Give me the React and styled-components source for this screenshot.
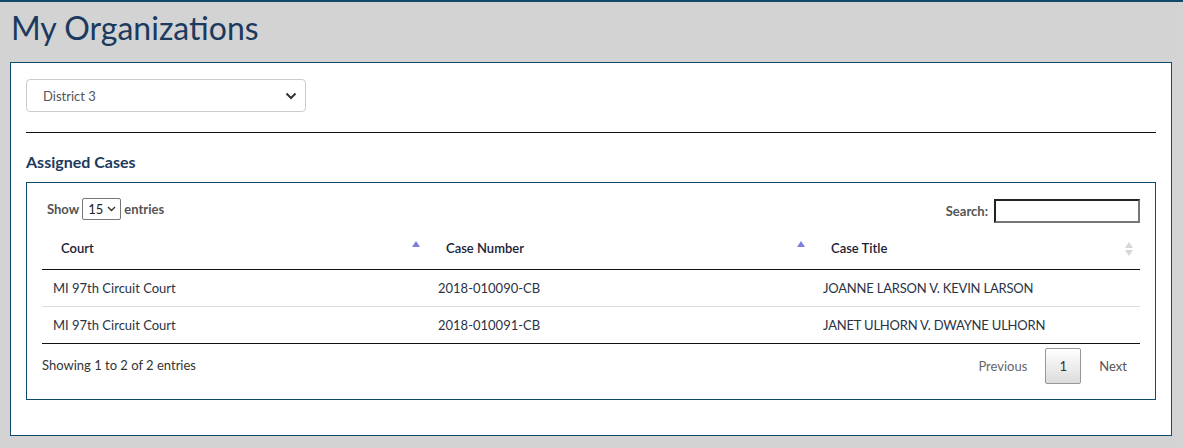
import React from "react";
import styled, { createGlobalStyle } from "styled-components";

const Global = createGlobalStyle`
  html, body { margin: 0; padding: 0; }
  body {
    background: #d3d3d3;
    font-family: "Lato", "Open Sans", "Liberation Sans", sans-serif;
    color: #333;
  }
  * { box-sizing: border-box; }
`;

const Page = styled.div`
  border-top: 2px solid #0f4a6a;
  min-height: 448px;
  padding: 0 11px 0 10px;
`;

const Title = styled.h1`
  margin: 0;
  padding: 7px 0 0 1px;
  height: 60px;
  font-size: 32px;
  font-weight: 400;
  line-height: 38px;
  color: #1b3a5e;
`;

const Panel = styled.section`
  background: #fff;
  border: 1px solid #0f4a6a;
  padding: 16px 15px 15px 15px;
`;

const SelectWrap = styled.div`
  position: relative;
  width: 280px;
  height: 33px;
  border: 1px solid #ccc;
  border-radius: 4px;
  display: flex;
  align-items: center;
  padding-left: 16px;
  font-size: 13px;
  color: #555;
`;

const Chevron = styled.svg`
  position: absolute;
  right: 8px;
  top: 12px;
`;

const Rule = styled.hr`
  margin: 20px 0 0 0;
  border: 0;
  border-top: 1px solid #111;
  height: 0;
`;

const SectionTitle = styled.h2`
  margin: 0;
  padding-top: 19px;
  height: 49px;
  font-size: 16px;
  font-weight: 700;
  line-height: 20px;
  color: #1b3a5e;
`;

const Box = styled.div`
  border: 1px solid #0f4a6a;
  padding: 16px 15px 15px 15px;
  margin-bottom: 20px;
`;

const Controls = styled.div`
  display: flex;
  justify-content: space-between;
  align-items: center;
  height: 24px;
  padding-left: 5px;
  font-size: 13px;
  font-weight: 700;
  color: #555;
`;

const Length = styled.div`
  display: flex;
  align-items: center;
  gap: 3px;
  margin-top: -4px;
`;

const MiniSelect = styled.div`
  display: inline-flex;
  align-items: center;
  gap: 4px;
  height: 22px;
  padding: 0 4px 0 5px;
  border: 1px solid #767676;
  border-radius: 2px;
  font-weight: 400;
  color: #222;
`;

const SearchBox = styled.label`
  display: flex;
  align-items: center;
  gap: 6px;
`;

const SearchInput = styled.input`
  width: 146px;
  height: 24px;
  border: 2px solid;
  border-color: #222 #767676 #767676 #222;
  padding: 1px 2px;
  font: inherit;
  outline: none;
`;

const Table = styled.table`
  width: 100%;
  margin-top: 6px;
  border-collapse: collapse;
  table-layout: fixed;
  font-size: 13px;
  border-bottom: 1px solid #111;
`;

const Th = styled.th`
  position: relative;
  text-align: left;
  padding: 9px 18px 11px 19px;
  line-height: 20px;
  font-weight: 600;
  color: #1a2238;
  border-bottom: 1px solid #111;
`;

const SortIcon = styled.svg`
  position: absolute;
  right: 6px;
  top: 11px;
`;

const Tr = styled.tr`
  & + & td { border-top: 1px solid #ddd; }
`;

const Td = styled.td`
  padding: 8px 10px 8px 11px;
  line-height: 20px;
  color: #2a3345;
  letter-spacing: ${(p) => (p.$caps ? "-0.2px" : "0")};
`;

const Footer = styled.div`
  display: flex;
  justify-content: space-between;
  align-items: center;
  padding-top: 4px;
  font-size: 13px;
  color: #333;
`;

const Status = styled.span`
  margin-top: -3px;
`;

const Pager = styled.div`
  display: flex;
  align-items: center;
`;

const PageLink = styled.span`
  padding: 0 ${(p) => (p.$last ? 13 : 14)}px 0 14px;
  color: ${(p) => (p.$muted ? "#666" : "#555")};
  line-height: 36px;
`;

const PageCurrent = styled.span`
  display: inline-flex;
  align-items: center;
  justify-content: center;
  width: 36px;
  height: 36px;
  margin: 0 4px;
  border: 1px solid #979797;
  border-radius: 2px;
  background: linear-gradient(to bottom, #fff 0%, #dcdcdc 100%);
  color: #333;
`;

const Asc = () => (
  <SortIcon width="10" height="16" viewBox="0 0 10 16">
    <path d="M5 1 L9 7 L1 7 Z" fill="#7b7fe0" />
  </SortIcon>
);

const Both = () => (
  <SortIcon width="10" height="16" viewBox="0 0 10 16" style={{ top: 12 }}>
    <path d="M5 1 L9 7 L1 7 Z" fill="#d6d6d6" />
    <path d="M5 15 L9 9 L1 9 Z" fill="#d6d6d6" />
  </SortIcon>
);

const rows = [
  ["MI 97th Circuit Court", "2018-010090-CB", "JOANNE LARSON V. KEVIN LARSON"],
  ["MI 97th Circuit Court", "2018-010091-CB", "JANET ULHORN V. DWAYNE ULHORN"],
];

export default function App() {
  return (
    <>
      <Global />
      <Page>
        <Title>My Organizations</Title>
        <Panel>
          <SelectWrap>
            District 3
            <Chevron width="12" height="8" viewBox="0 0 12 8">
              <path d="M1.5 1.5 L6 6 L10.5 1.5" fill="none" stroke="#333" strokeWidth="2" />
            </Chevron>
          </SelectWrap>
          <Rule />
          <SectionTitle>Assigned Cases</SectionTitle>
          <Box>
            <Controls>
              <Length>
                Show
                <MiniSelect>
                  15
                  <svg width="9" height="6" viewBox="0 0 9 6">
                    <path d="M1 1 L4.5 4.5 L8 1" fill="none" stroke="#333" strokeWidth="1.4" />
                  </svg>
                </MiniSelect>
                entries
              </Length>
              <SearchBox>
                Search:
                <SearchInput type="search" />
              </SearchBox>
            </Controls>
            <Table>
              <colgroup>
                <col style={{ width: 385 }} />
                <col style={{ width: 385 }} />
                <col />
              </colgroup>
              <thead>
                <tr>
                  <Th>Court<Asc /></Th>
                  <Th>Case Number<Asc /></Th>
                  <Th>Case Title<Both /></Th>
                </tr>
              </thead>
              <tbody>
                {rows.map((r) => (
                  <Tr key={r[1]}>
                    <Td>{r[0]}</Td>
                    <Td>{r[1]}</Td>
                    <Td $caps>{r[2]}</Td>
                  </Tr>
                ))}
              </tbody>
            </Table>
            <Footer>
              <Status>Showing 1 to 2 of 2 entries</Status>
              <Pager>
                <PageLink $muted>Previous</PageLink>
                <PageCurrent>1</PageCurrent>
                <PageLink $last>Next</PageLink>
              </Pager>
            </Footer>
          </Box>
        </Panel>
      </Page>
    </>
  );
}
